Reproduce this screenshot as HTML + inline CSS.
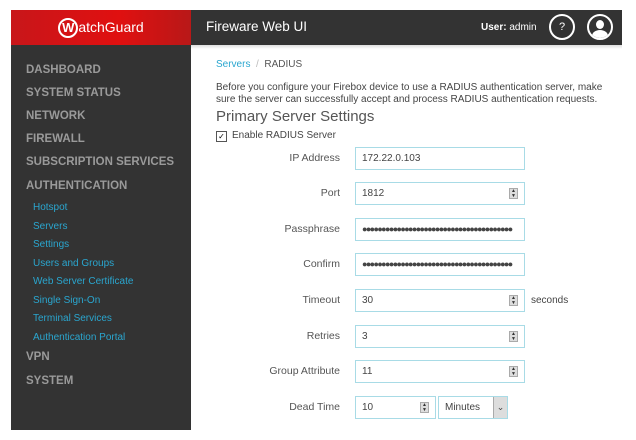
<!DOCTYPE html>
<html><head><style>
body{margin:0;width:636px;height:440px;background:#fff;font-family:"Liberation Sans",sans-serif;position:relative;overflow:hidden}
.abs{position:absolute}
.logo{left:11px;top:10px;width:180px;height:35px;background:linear-gradient(90deg,#c8161a,#e01010 60%,#b81818);color:#fff;font-size:14px;text-align:center;line-height:35px}
.hdr{left:191px;top:10px;width:431px;height:35px;background:#333}
.side{left:11px;top:45px;width:180px;height:385px;background:#333}
.nav{position:absolute;left:15px;color:#9a9a9a;font-weight:bold;font-size:11.5px}
.sub{position:absolute;left:22px;color:#2aa6cf;font-size:10px}
.lbl{position:absolute;width:140px;left:200px;text-align:right;font-size:10.5px;color:#555}
.inp{position:absolute;left:355px;border:1px solid #a8dbe6;font-size:10px;color:#444;line-height:21px;box-sizing:border-box;width:170px;padding-left:6px;height:23px;overflow:hidden;white-space:nowrap}
.spin{position:absolute;right:6px;top:5px;width:9px;height:11px;background:#ddd;border:1px solid #aaa;box-sizing:border-box;font-size:5px;line-height:5px;text-align:center;color:#333}
.dots{letter-spacing:-1.6px;font-size:9px}
</style></head><body>
<div class="abs logo"><span style="display:inline-block;width:20px;height:20px;border:2px solid #fff;border-radius:50%;font-weight:bold;vertical-align:middle;box-sizing:border-box;font-size:13px;line-height:16px">W</span>atchGuard</div>
<div class="abs hdr">
<div class="abs" style="left:15px;top:9px;color:#fff;font-size:13.5px">Fireware Web UI</div>
<div class="abs" style="left:290px;top:12px;color:#fff;font-size:10px"><b>User:</b> admin</div>
<div class="abs" style="left:358px;top:4px;border:2px solid #fff;border-radius:50%;color:#fff;font-size:11px;text-align:center;line-height:23px;box-sizing:border-box;width:26px;height:26px">?</div>
<div class="abs" style="left:396px;top:4px;width:26px;height:26px;border:2px solid #fff;border-radius:50%;box-sizing:border-box;overflow:hidden">
<div class="abs" style="left:7px;top:4px;width:8px;height:9px;background:#fff;border-radius:50%"></div>
<div class="abs" style="left:3px;top:14px;width:16px;height:12px;background:#fff;border-radius:50% 50% 0 0"></div></div>
</div>
<div class="abs side">
<div class="nav" style="top:19px">DASHBOARD</div>
<div class="nav" style="top:42px">SYSTEM STATUS</div>
<div class="nav" style="top:65px">NETWORK</div>
<div class="nav" style="top:88px">FIREWALL</div>
<div class="nav" style="top:111px">SUBSCRIPTION SERVICES</div>
<div class="nav" style="top:135px">AUTHENTICATION</div>
<div class="sub" style="top:157px">Hotspot</div>
<div class="sub" style="top:176px">Servers</div>
<div class="sub" style="top:194px">Settings</div>
<div class="sub" style="top:213px">Users and Groups</div>
<div class="sub" style="top:231px">Web Server Certificate</div>
<div class="sub" style="top:250px">Single Sign-On</div>
<div class="sub" style="top:268px">Terminal Services</div>
<div class="sub" style="top:287px">Authentication Portal</div>
<div class="nav" style="top:306px">VPN</div>
<div class="nav" style="top:330px">SYSTEM</div>
</div>
<div class="abs" style="left:191px;top:45px;width:431px;height:4px;background:linear-gradient(#ddd,#fff)"></div>
<div class="abs" style="left:216px;top:59px;font-size:10px;color:#555"><span style="color:#2aa6cf">Servers</span> <span style="color:#bbb">&nbsp;/&nbsp;</span> RADIUS</div>
<div class="abs" style="left:216px;top:82px;font-size:10px;color:#444;line-height:12px;width:400px">Before you configure your Firebox device to use a RADIUS authentication server, make sure the server can successfully accept and process RADIUS authentication requests.</div>
<div class="abs" style="left:216px;top:108px;font-size:15px;color:#555">Primary Server Settings</div>
<div class="abs" style="left:216px;top:131px;width:9px;height:9px;border:1px solid #555;font-size:8px;line-height:9px;text-align:center">✓</div>
<div class="abs" style="left:232px;top:130px;font-size:10px;color:#444">Enable RADIUS Server</div>

<div class="lbl" style="top:152px">IP Address</div><div class="inp" style="top:147px">172.22.0.103</div>
<div class="lbl" style="top:187px">Port</div><div class="inp" style="top:182px">1812<div class="spin">▲<br>▼</div></div>
<div class="lbl" style="top:223px">Passphrase</div><div class="inp dots" style="top:218px">●●●●●●●●●●●●●●●●●●●●●●●●●●●●●●●●●●●●●●●</div>
<div class="lbl" style="top:258px">Confirm</div><div class="inp dots" style="top:253px">●●●●●●●●●●●●●●●●●●●●●●●●●●●●●●●●●●●●●●●</div>
<div class="lbl" style="top:294px">Timeout</div><div class="inp" style="top:289px">30<div class="spin">▲<br>▼</div></div>
<div class="abs" style="left:531px;top:295px;font-size:10px;color:#444">seconds</div>
<div class="lbl" style="top:330px">Retries</div><div class="inp" style="top:325px">3<div class="spin">▲<br>▼</div></div>
<div class="lbl" style="top:365px">Group Attribute</div><div class="inp" style="top:360px">11<div class="spin">▲<br>▼</div></div>
<div class="lbl" style="top:401px">Dead Time</div><div class="inp" style="top:396px;width:81px">10<div class="spin">▲<br>▼</div></div>
<div class="inp" style="top:396px;left:438px;width:70px">Minutes<div class="abs" style="right:0;top:0;width:13px;height:21px;background:#ddd;border-left:1px solid #aaa;font-size:9px;text-align:center;line-height:20px">⌄</div></div>
</body></html>
